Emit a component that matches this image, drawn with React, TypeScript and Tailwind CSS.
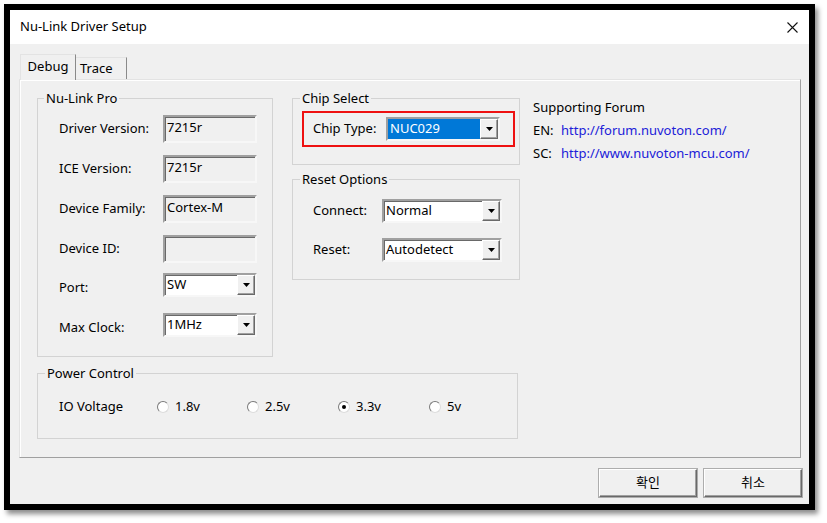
import React from 'react';

const font = { fontFamily: '"Noto Sans", "Noto Sans CJK KR", sans-serif' };

const Sunken = 'border-2 border-t-[#a0a0a0] border-l-[#a0a0a0] border-b-[#f7f7f7] border-r-[#f7f7f7] shadow-[inset_1px_1px_0_#696969]';

function Arrow() {
  return (
    <svg width="7" height="4" viewBox="0 0 7 4">
      <path d="M0 0H7L3.5 4Z" fill="#000" />
    </svg>
  );
}

function Combo({ value, w, selected }: { value: string; w: string; selected?: boolean }) {
  return (
    <div className={`${w} h-[24px] flex bg-white ${Sunken}`}>
      <div className="flex-1 flex items-stretch min-w-0">
        {selected ? (
          <span className="flex-1 flex items-center pl-[2px] bg-[#0078d7] text-white">{value}</span>
        ) : (
          <span className="flex-1 flex items-center pl-[2px]">{value}</span>
        )}
      </div>
      <div className="w-[18px] bg-[#f0f0f0] flex items-center justify-center border border-t-white border-l-white border-b-[#696969] border-r-[#696969] shadow-[inset_-1px_-1px_0_#a0a0a0]">
        <Arrow />
      </div>
    </div>
  );
}

function ReadBox({ value }: { value: string }) {
  return (
    <div className={`w-[94px] h-[28px] bg-[#f0f0f0] ${Sunken} pl-[2px] leading-[20px]`}>{value}</div>
  );
}

function Radio({ label, checked, w }: { label: string; checked?: boolean; w: string }) {
  return (
    <div className={`${w} flex items-center gap-[6px]`}>
      <span className="w-[12px] h-[12px] rounded-full bg-white border border-t-[#7a7a7a] border-l-[#7a7a7a] border-b-[#dcdcdc] border-r-[#dcdcdc] flex items-center justify-center">
        {checked && <span className="w-[4px] h-[4px] rounded-full bg-black" />}
      </span>
      <span>{label}</span>
    </div>
  );
}

function Btn({ label }: { label: string }) {
  return (
    <div className="w-[98px] h-[28px] flex items-center justify-center bg-[#f0f0f0] border border-t-white border-l-white border-b-[#696969] border-r-[#696969] shadow-[inset_-1px_-1px_0_#a0a0a0,0_0_0_1px_#adadad]">
      {label}
    </div>
  );
}

const nuLinkRows: { label: string; value: string; kind: 'box' | 'combo' }[] = [
  { label: 'Driver Version:', value: '7215r', kind: 'box' },
  { label: 'ICE Version:', value: '7215r', kind: 'box' },
  { label: 'Device Family:', value: 'Cortex-M', kind: 'box' },
  { label: 'Device ID:', value: '', kind: 'box' },
  { label: 'Port:', value: 'SW', kind: 'combo' },
  { label: 'Max Clock:', value: '1MHz', kind: 'combo' },
];

export default function App() {
  return (
    <div className="w-[827px] h-[523px] bg-white pt-[4px] pl-[4px] text-[13px] text-black" style={font}>
      <div className="w-[811px] h-[506px] border-[6px] border-black flex flex-col shadow-[3px_4px_5px_rgba(0,0,0,0.45)]">
        {/* title bar */}
        <div className="h-[34px] bg-white flex items-center justify-between pl-[10px] pr-[11px]">
          <span>Nu-Link Driver Setup</span>
          <svg width="11" height="11" viewBox="0 0 11 11">
            <path d="M0.5 0.5L10.5 10.5M10.5 0.5L0.5 10.5" stroke="#111" strokeWidth="1.1" />
          </svg>
        </div>

        {/* body */}
        <div className="flex-1 bg-[#f0f0f0] pl-[9px] pr-[8px] pt-[10px] flex flex-col">
          <div className="h-[25px] flex items-end pl-[1px]">
            <div className="relative z-10 -mb-[1px] w-[56px] h-[26px] bg-[#f0f0f0] flex items-center justify-center border-t border-l border-r border-t-[#e3e3e3] border-l-[#e3e3e3] border-r-[#8a8a8a] pb-[2px]">
              Debug
            </div>
            <div className="w-[51px] h-[22px] flex items-center pl-[4px] border-t border-r border-t-[#e3e3e3] border-r-[#8a8a8a]">
              Trace
            </div>
          </div>

          <div className="w-[782px] h-[379px] border border-t-[#e3e3e3] border-l-[#e3e3e3] border-b-[#a0a0a0] border-r-[#a0a0a0] shadow-[inset_1px_1px_0_#ffffff] pl-[17px] pt-[9px] flex flex-col">
            <div className="flex">
              {/* Nu-Link Pro */}
              <fieldset className="w-[236px] border border-[#d3d3d3]">
                <legend className="ml-[6px] px-[2px] leading-[18px]">Nu-Link Pro</legend>
                <div className="pl-[21px] pt-[2px] pb-[7px]">
                  {nuLinkRows.map((r) => (
                    <div key={r.label} className={`h-[40px] flex ${r.kind === 'box' ? 'items-center' : 'items-start pt-[4px]'}`}>
                      <span className={`w-[104px] ${r.kind === 'combo' ? 'leading-[24px] mt-[2px]' : ''}`}>{r.label}</span>
                      {r.kind === 'box' ? <ReadBox value={r.value} /> : <Combo value={r.value} w="w-[94px]" />}
                    </div>
                  ))}
                </div>
              </fieldset>

              {/* middle column */}
              <div className="ml-[19px] flex flex-col">
                <fieldset className="w-[228px] border border-[#d3d3d3]">
                  <legend className="ml-[7px] px-[2px] leading-[18px]">Chip Select</legend>
                  <div className="pl-[9px] pt-[4px] pb-[17px]">
                    <div className="w-[213px] h-[36px] border-2 border-[#ee1111] flex items-center pl-[9px]">
                      <span className="w-[73px]">Chip Type:</span>
                      <Combo value="NUC029" w="w-[114px]" selected />
                    </div>
                  </div>
                </fieldset>

                <fieldset className="mt-[5px] w-[228px] border border-[#d3d3d3]">
                  <legend className="ml-[7px] px-[2px] leading-[18px]">Reset Options</legend>
                  <div className="pl-[20px] pt-[3px] pb-[10px]">
                    <div className="h-[39px] flex items-center">
                      <span className="w-[69px]">Connect:</span>
                      <Combo value="Normal" w="w-[120px]" />
                    </div>
                    <div className="h-[39px] flex items-center">
                      <span className="w-[69px]">Reset:</span>
                      <Combo value="Autodetect" w="w-[120px]" />
                    </div>
                  </div>
                </fieldset>
              </div>

              {/* forum */}
              <div className="ml-[13px] mt-[7px] leading-[23px]">
                <div>Supporting Forum</div>
                <div className="flex">
                  <span className="w-[28px]">EN:</span>
                  <span className="text-[#2020d8]">http://forum.nuvoton.com/</span>
                </div>
                <div className="flex">
                  <span className="w-[28px]">SC:</span>
                  <span className="text-[#2020d8]">http://www.nuvoton-mcu.com/</span>
                </div>
              </div>
            </div>

            {/* Power Control */}
            <fieldset className="mt-[7px] w-[481px] border border-[#d3d3d3]">
              <legend className="ml-[7px] px-[2px] leading-[18px]">Power Control</legend>
              <div className="pl-[21px] pt-[6px] pb-[12px] h-[38px] box-content flex items-center">
                <span className="w-[98px]">IO Voltage</span>
                <Radio label="1.8v" w="w-[90px]" />
                <Radio label="2.5v" w="w-[91px]" />
                <Radio label="3.3v" checked w="w-[91px]" />
                <Radio label="5v" w="w-[40px]" />
              </div>
            </fieldset>
          </div>

          <div className="mt-[11px] -mr-[1px] flex justify-end gap-[7px]">
            <Btn label="확인" />
            <Btn label="취소" />
          </div>
        </div>
      </div>
    </div>
  );
}
